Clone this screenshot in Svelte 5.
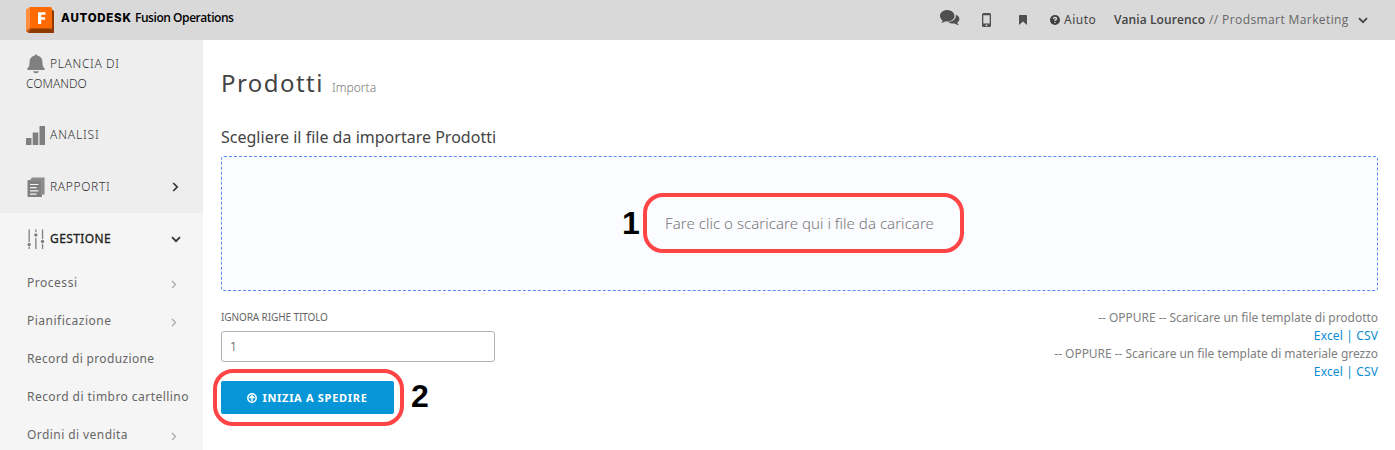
<script>
  const submenu = [
    { label: 'Processi', more: true, spacing: 0.52 },
    { label: 'Pianificazione', more: true, spacing: 0.5 },
    { label: 'Record di produzione', more: false, spacing: 0.35 },
    { label: 'Record di timbro cartellino', more: false, spacing: 0.45 },
    { label: 'Ordini di vendita', more: true, spacing: 0.43 }
  ];
</script>

<header>
  <svg class="logo" width="29" height="27" viewBox="0 0 29 27">
    <path d="M0 2.500 4 0v21.500L0 24z" fill="#ff8f3f" />
    <path d="M26 2.500l2 1.500V26H2l2.500-4.500H26z" fill="#8f3a00" />
    <path d="M0 24 4 21H26L24.500 22H5L2 25.500z" fill="#c25208" />
    <path d="M4 0h20.500Q26 0 26 1.500V21H4z" fill="#ff6b00" />
    <path d="M12 5.200h7.500v2.500h-4.300v2.500h3.900v2.500h-3.900v4.300H12z" fill="#fff" />
  </svg>
  <div class="brand"><b>AUTODESK</b><span>Fusion Operations</span></div>
  <nav>
    <svg class="chat" width="20" height="16" viewBox="0 0 20 16" fill="#4f4f4f">
      <path d="M7.300 0C3.300 0 0 2.600 0 5.900c0 1.900 1 3.500 2.700 4.600-.3.900-.9 1.500-1.500 2.200 1.700-.1 3.200-.7 4.400-1.500.6.100 1.100.2 1.700.2 4 0 7.200-2.400 7.200-5.500S11.300 0 7.300 0z" />
      <path d="M15.900 4.800c2.200.9 3.500 2.400 3.500 4.300 0 1.400-.8 2.700-2.100 3.600.2.900.8 1.500 1.500 2.300-1.700 0-3-.6-4.100-1.500-2.700.3-5-.3-6.400-1.500 4.300-.2 8.200-2.900 7.600-7.200z" />
    </svg>
    <svg class="phone" width="9" height="14" viewBox="0 0 9 14"><path fill="#4f4f4f" fill-rule="evenodd" d="M1.500 0h6Q9 0 9 1.500v11Q9 14 7.500 14h-6Q0 14 0 12.500v-11Q0 0 1.500 0zM1.300 2.200v8.400h6.400V2.200zM4.500 11.400a.9.900 0 1 0 .01 0z" /></svg>
    <svg class="mark" width="8" height="10" viewBox="0 0 8 10"><path fill="#4f4f4f" d="M.8 0h6.400q.8 0 .8.800V10L4 6.600 0 10V.8Q0 0 .8 0z" /></svg>
    <svg class="help" width="10" height="10" viewBox="0 0 10 10"><circle cx="5" cy="5" r="5" fill="#3f3f3f" /><path d="M3.300 3.900Q3.500 2.500 5 2.500t1.600 1.300Q6.600 4.600 5 5.200v.7M5 6.900v1.200" fill="none" stroke="#ddd" stroke-width="1.300" /></svg>
    <span class="aiuto">Aiuto</span>
    <span class="user">Vania Lourenco</span><span class="org">// Prodsmart Marketing</span>
    <svg class="caret" width="10" height="7" viewBox="0 0 10 7"><path d="M1 1.200 5 5.200 9 1.200" fill="none" stroke="#444" stroke-width="1.800" /></svg>
  </nav>
</header>

<div class="body">
  <aside>
    <div class="upper">
      <div class="item two">
        <svg width="18" height="20" viewBox="0 0 18 20" fill="#808080"><path d="M9 .5Q10.300.5 10.500 1.800C14 2.500 15.500 5 15.500 8.500c0 3.700.8 4.700 2 5.700.8 1 .2 1.800-.7 1.800H1.200c-.9 0-1.500-.8-.7-1.800 1.200-1 2-2 2-5.700 0-3.500 1.500-6 5-6.700Q7.700.5 9 .5zM6 17.300h6q-.5 2-3 2T6 17.300z" /></svg><span style="letter-spacing:.65px">PLANCIA DI</span>
        <div class="wrap">COMANDO</div>
      </div>
      <div class="item">
        <svg class="bars" width="19" height="20" viewBox="0 0 19 20" fill="#808080"><path d="M0 13h5.500v7H0zM6.700 7.500h5.600V20H6.700zM13.500 1H19v19h-5.500z" /></svg><span style="letter-spacing:.85px">ANALISI</span>
      </div>
      <div class="item">
        <svg width="18" height="20" viewBox="0 0 18 20"><path d="M3.500 3V2h1V.5H17.500V17.500H15V20H1.500Q.5 20 .5 19V4Q.5 3 1.500 3z" fill="#808080" /><path d="M3 3.200H14.500V17.800M4.600 1.600H16V17" fill="none" stroke="#aaa" stroke-width=".5" /><path d="M3 7.500h8.500M3 10.700h6.500M3 13.900h8.500M3 17.100h6.500" stroke="#f2f2f2" stroke-width="1.200" /></svg><span style="letter-spacing:.65px">RAPPORTI</span>
        <svg class="arrow" width="7" height="10" viewBox="0 0 7 10"><path d="M1.200 1 5.200 5 1.200 9" fill="none" stroke="#333" stroke-width="1.700" /></svg>
      </div>
    </div>
    <div class="item active">
      <svg width="18" height="20" viewBox="0 0 18 20" fill="#808080"><path d="M1.500.5h1.300v12.500H1.500zM1.500 17.500h1.300V20H1.500zM8.200.5h1.300v2.500H8.200zM8.200 9h1.300v11H8.200zM14.900.5h1.300v9.500h-1.300zM14.900 15h1.300v5h-1.300z" /><circle cx="2.150" cy="15.500" r="1.700" /><circle cx="8.850" cy="6" r="1.700" /><circle cx="15.550" cy="12.500" r="1.700" /></svg><span class="strong">GESTIONE</span>
      <svg class="arrow down" width="10" height="7" viewBox="0 0 10 7"><path d="M1 1.200 5 5.200 9 1.200" fill="none" stroke="#333" stroke-width="1.700" /></svg>
    </div>
    <ul>
      {#each submenu as entry}
        <li>
          <span style="letter-spacing:{entry.spacing}px">{entry.label}</span>
          {#if entry.more}<svg width="6" height="9" viewBox="0 0 6 9"><path d="M1 1 4.500 4.500 1 8" fill="none" stroke="#aaa" stroke-width="1.300" /></svg>{/if}
        </li>
      {/each}
    </ul>
  </aside>

  <main>
    <h1>Prodotti<small>Importa</small></h1>
    <h2>Scegliere il file da importare Prodotti</h2>
    <div class="drop">
      <span>Fare clic o scaricare qui i file da caricare</span>
      <div class="ring ring1"></div><b class="num n1">1</b>
    </div>
    <div class="row">
      <div class="left">
        <label for="skip">IGNORA RIGHE TITOLO</label>
        <input id="skip" value="1" />
        <div class="send">
          <button><svg width="10" height="10" viewBox="0 0 10 10" fill="none" stroke="#fff"><circle cx="5" cy="5" r="4.200" stroke-width="1.500" /><path d="M5 8V3M2.600 5.100 5 2.700l2.400 2.400" stroke-width="1.500" /></svg>INIZIA A SPEDIRE</button>
          <div class="ring ring2"></div><b class="num n2">2</b>
        </div>
      </div>
      <div class="right">
        <div>-- OPPURE -- Scaricare un file template di prodotto</div>
        <div class="link">Excel | CSV</div>
        <div>-- OPPURE -- Scaricare un file template di materiale grezzo</div>
        <div class="link">Excel | CSV</div>
      </div>
    </div>
  </main>
</div>

<style>
  :global(body) { background: #fff; font: 12px/20px 'Noto Sans', sans-serif; color: #666; overflow: hidden; }
  * { box-sizing: border-box; }
  svg { flex: none; display: block; }
  header { height: 40px; background: #d9d9d9; display: flex; align-items: flex-start; padding: 0 27px 0 26px; }
  .logo { margin-top: 7px; }
  .brand { display: flex; margin: 8px 0 0 6px; color: #000; white-space: nowrap; }
  .brand b { font: 800 11.500px/20px Inter, sans-serif; letter-spacing: .75px; width: 74px; }
  .brand span { font: 600 12px/20px 'Open Sans', sans-serif; letter-spacing: -.45px; }
  nav { margin-left: auto; display: flex; height: 40px; align-items: center; color: #444; white-space: nowrap; }
  .chat { margin: 0 22px 5px 0; }
  .phone { margin-right: 28px; }
  .mark { margin-right: 23px; }
  .help { margin-right: 4px; }
  .aiuto { letter-spacing: .5px; width: 50px; }
  .user, .org { font-family: 'Open Sans', sans-serif; }
  .user { letter-spacing: .08px; width: 95px; font-weight: 600; }
  .org { font-weight: 500; letter-spacing: .4px; width: 149px; color: #666; }
  .body { display: flex; }
  aside { width: 203px; height: 410px; background: #f5f5f5; overflow: hidden; flex: none; }
  .upper { background: #eee; height: 173px; }
  .item { height: 52px; display: flex; align-items: center; padding-left: 27px; font-weight: 300; color: #333; }
  .item span { margin-left: 5px; }
  .item .bars { margin-left: -1px; }
  .item .arrow { margin: 0 24px 0 auto; }
  .item .down { margin-right: 22px; }
  .two { height: 69px; flex-wrap: wrap; align-content: flex-start; padding: 14px 0 0 27px; }
  .two .wrap { width: 100%; margin-left: -1px; }
  .active { color: #222; font-weight: 400; }
  .item .strong { letter-spacing: .4px; -webkit-text-stroke: .3px #222; }
  ul { list-style: none; margin: -1px 0 0; padding: 0; }
  li { height: 38px; display: flex; align-items: center; justify-content: space-between; padding: 0 26px 0 27px; white-space: nowrap; }
  li svg { margin-top: 3px; }
  main { padding: 0 17px 0 18px; flex: 1; }
  h1 { font-size: 24px; line-height: 34px; letter-spacing: 1.450px; font-weight: 400; color: #444; margin: 26px 0 0; }
  small { font-size: 12px; font-weight: 300; letter-spacing: .05px; color: #777; margin-left: 8px; }
  h2 { font-size: 16px; line-height: 20px; letter-spacing: .01px; font-weight: 400; color: #444; margin: 22px 0 0; white-space: nowrap; }
  .drop { height: 135px; margin-top: 9px; position: relative; display: flex; align-items: center; justify-content: center; padding-bottom: 2px; border: 1px dashed #5b8af2; border-radius: 3px; background: #fbfcff; font-weight: 300; font-size: 15px; letter-spacing: .04px; color: #777; }
  .ring { position: absolute; border: 4px solid #ff4445; border-radius: 20px; }
  .ring1 { left: 421px; top: 36px; width: 321px; height: 60px; }
  .num { position: absolute; font: bold 32px/32px 'Liberation Sans', sans-serif; color: #000; letter-spacing: 0; }
  .n1 { left: 400px; top: 50px; }
  .row { display: flex; justify-content: space-between; margin-top: 16px; }
  label { display: block; font-size: 10px; letter-spacing: -.1px; line-height: 20px; }
  input { display: block; width: 274px; height: 31px; margin-top: 4px; border: 1px solid #b0b0b8; border-radius: 3px; padding: 0 8px; font: 300 12px 'Noto Sans', sans-serif; color: #444; background: #fff; }
  .send { position: relative; margin-top: 19px; }
  button { width: 173px; height: 33px; border: 0; border-radius: 2px; background: #0696d7; color: #fff; font: 700 11px 'Noto Sans', sans-serif; letter-spacing: .7px; display: flex; align-items: center; justify-content: center; gap: 5px; padding: 0; white-space: nowrap; }
  .ring2 { left: -8px; top: -12px; width: 191px; height: 57px; }
  .n2 { left: 190px; top: -1px; }
  .right { text-align: right; line-height: 18px; color: #808080; letter-spacing: -.03px; padding-top: 2px; }
  .link { color: #0d8bd0; letter-spacing: .14px; }
</style>
